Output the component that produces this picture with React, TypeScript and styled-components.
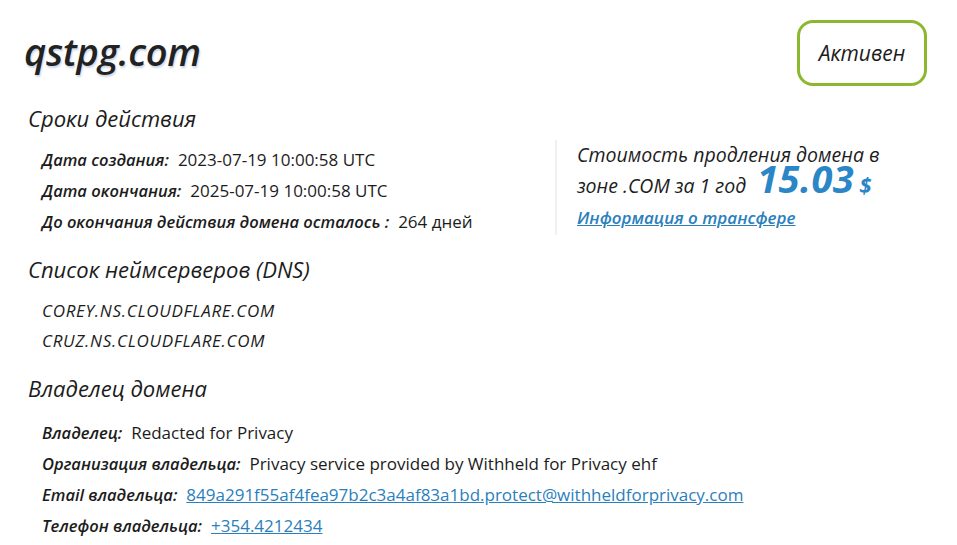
import React from 'react';
import styled, { createGlobalStyle } from 'styled-components';

const GlobalStyle = createGlobalStyle`
  html, body {
    margin: 0;
    padding: 0;
    background: #fff;
  }
  body {
    font-family: 'Open Sans', 'Noto Sans', sans-serif;
    color: #1c1c1c;
  }
`;

const datesRows = [
  { label: 'Дата создания:', value: '2023-07-19 10:00:58 UTC' },
  { label: 'Дата окончания:', value: '2025-07-19 10:00:58 UTC' },
  { label: 'До окончания действия домена осталось :', value: '264 дней' },
];

const nameservers = ['COREY.NS.CLOUDFLARE.COM', 'CRUZ.NS.CLOUDFLARE.COM'];

const ownerRows = [
  { label: 'Владелец:', value: 'Redacted for Privacy' },
  { label: 'Организация владельца:', value: 'Privacy service provided by Withheld for Privacy ehf' },
  {
    label: 'Email владельца:',
    value: '849a291f55af4fea97b2c3a4af83a1bd.protect@withheldforprivacy.com',
    href: 'mailto:849a291f55af4fea97b2c3a4af83a1bd.protect@withheldforprivacy.com',
  },
  { label: 'Телефон владельца:', value: '+354.4212434', href: 'tel:+3544212434' },
];

type Row = { label: string; value: string; href?: string };

const InfoList = ({ rows, top }: { rows: Row[]; top: number }) => (
  <DataList $top={top}>
    {rows.map((r) => (
      <DataItem key={r.label}>
        <Label>{r.label}</Label>
        {r.href ? <ValueLink href={r.href}>{r.value}</ValueLink> : <Value>{r.value}</Value>}
      </DataItem>
    ))}
  </DataList>
);

export default function App() {
  return (
    <>
      <GlobalStyle />
      <Page>
        <Header>
          <Title>qstpg.com</Title>
          <StatusBadge>Активен</StatusBadge>
        </Header>

        <TermsGrid>
          <div>
            <SectionTitle>Сроки действия</SectionTitle>
            <InfoList rows={datesRows} top={11} />
          </div>
          <PriceBox>
            <PriceLine>Стоимость продления домена в</PriceLine>
            <PriceLine>
              зоне .COM за 1 год <Price>15.03</Price> <Currency>$</Currency>
            </PriceLine>
            <TransferLink href="#">Информация о трансфере</TransferLink>
          </PriceBox>
        </TermsGrid>

        <Section $top={17}>
          <SectionTitle>Список неймсерверов (DNS)</SectionTitle>
          <DataList $top={12}>
            {nameservers.map((ns) => (
              <NsItem key={ns}>{ns}</NsItem>
            ))}
          </DataList>
        </Section>

        <Section $top={17}>
          <SectionTitle>Владелец домена</SectionTitle>
          <InfoList rows={ownerRows} top={14} />
        </Section>
      </Page>
    </>
  );
}

const Page = styled.main`
  padding: 18px 30px 0 24px;
`;

const Header = styled.header`
  display: flex;
  justify-content: space-between;
  align-items: center;
  height: 66px;
  padding-top: 2px;
`;

const Title = styled.h1`
  margin: -4px 0 0;
  font-size: 38px;
  font-weight: 600;
  font-style: italic;
  letter-spacing: -0.3px;
  color: #222;
  text-shadow: 1px 2px 2px rgba(140, 165, 200, 0.45);
`;

const StatusBadge = styled.div`
  box-sizing: border-box;
  width: 130px;
  height: 66px;
  border: 3px solid #8cb830;
  border-radius: 16px;
  display: flex;
  align-items: center;
  justify-content: center;
  font-size: 21px;
  font-style: italic;
  font-weight: 500;
  color: #1c1c1c;
`;

const TermsGrid = styled.section`
  display: grid;
  grid-template-columns: 531px 1fr;
  align-items: start;
  margin-top: 17px;
`;

const Section = styled.section<{ $top: number }>`
  margin-top: ${(p) => p.$top}px;
`;

const SectionTitle = styled.h2`
  margin: 0 0 0 4px;
  font-size: 22px;
  line-height: 30px;
  font-weight: 500;
  font-style: italic;
  color: #1c1c1c;
`;

const DataList = styled.ul<{ $top: number }>`
  list-style: none;
  margin: ${(p) => p.$top}px 0 0;
  padding: 0 0 0 18px;
`;

const DataItem = styled.li`
  font-size: 17px;
  line-height: 31px;
  white-space: nowrap;
`;

const Label = styled.span`
  font-style: italic;
  font-weight: 600;
  font-size: 16.5px;
  margin-right: 9px;
`;

const Value = styled.span`
  font-weight: 400;
`;

const ValueLink = styled.a`
  color: #2a80bd;
  text-decoration: underline;
`;

const NsItem = styled.li`
  font-size: 17px;
  line-height: 30px;
  font-style: italic;
  font-weight: 500;
  letter-spacing: 0.7px;
`;

const PriceBox = styled.div`
  margin-top: 37px;
  height: 95px;
  border-left: 2px solid #f0f0f0;
  padding-left: 20px;
`;

const PriceLine = styled.div`
  font-size: 19.5px;
  line-height: 30px;
  height: 30px;
  font-style: italic;
  font-weight: 500;
  white-space: nowrap;

  & + & {
    height: 32px;
    line-height: 32px;
  }
`;

const Price = styled.span`
  font-size: 38px;
  line-height: 0;
  font-weight: 700;
  color: #2a86c6;
  letter-spacing: 0.5px;
  margin-left: 6px;
`;

const Currency = styled.span`
  font-size: 22px;
  line-height: 0;
  font-weight: 700;
  color: #2a86c6;
`;

const TransferLink = styled.a`
  display: inline-block;
  margin-top: 4px;
  font-size: 17px;
  font-style: italic;
  font-weight: 600;
  color: #2a80bd;
  text-decoration: underline;
`;
